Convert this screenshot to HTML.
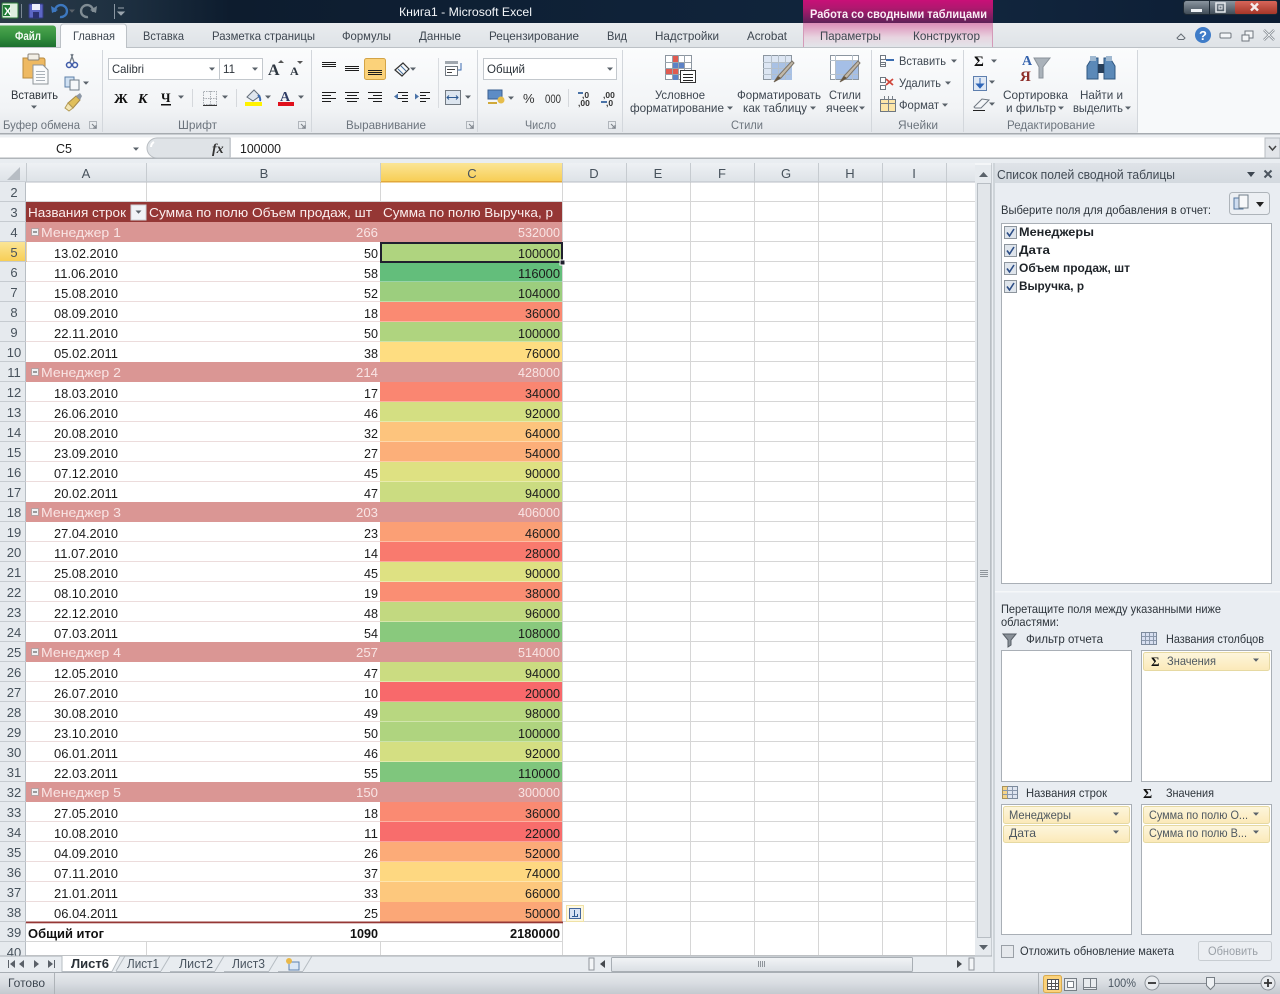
<!DOCTYPE html>
<html lang="ru"><head><meta charset="utf-8"><title>Книга1 - Microsoft Excel</title>
<style>
html,body{margin:0;padding:0;background:#e9edf2;width:1280px;height:994px;overflow:hidden}
svg{display:block;font-family:"Liberation Sans",sans-serif}
.r{font-size:12px;fill:#3d4650}
.g{font-size:12px;fill:#6c747d}
.p{font-size:12px;fill:#2c333a}
.c{font-size:13px;fill:#1c1c1c}
.b{font-size:13px;fill:#111;font-weight:bold}
.h{font-size:13px;fill:#fbeeee}
.m{font-size:13px;fill:#f9e4e4}
.n{font-size:13px;fill:#47525c}
.e{text-anchor:end}
.k{stroke:#222;stroke-width:1;fill:none}
</style></head><body>
<svg width="1280" height="994" viewBox="0 0 1280 994" xmlns="http://www.w3.org/2000/svg">
<defs>
<linearGradient id="tb" x1="0" x2="1" y1="0" y2="0"><stop offset="0" stop-color="#2b3b48"/><stop offset=".1" stop-color="#1d2f40"/><stop offset=".18" stop-color="#0d1c2e"/><stop offset=".5" stop-color="#0f2238"/><stop offset=".75" stop-color="#12263e"/><stop offset="1" stop-color="#0c1d33"/></linearGradient>
<linearGradient id="pk" x1="0" x2="0" y1="0" y2="1"><stop offset="0" stop-color="#c90f78"/><stop offset=".35" stop-color="#b0186f"/><stop offset="1" stop-color="#5e2158"/></linearGradient>
<linearGradient id="pk2" x1="0" x2="0" y1="0" y2="1"><stop offset="0" stop-color="#dc8cb8"/><stop offset=".6" stop-color="#e8d4e0"/><stop offset="1" stop-color="#e2e5e9"/></linearGradient>
<linearGradient id="tr" x1="0" x2="0" y1="0" y2="1"><stop offset="0" stop-color="#e9ecef"/><stop offset="1" stop-color="#dfe3e7"/></linearGradient>
<linearGradient id="rb" x1="0" x2="0" y1="0" y2="1"><stop offset="0" stop-color="#fbfcfd"/><stop offset=".7" stop-color="#f2f4f6"/><stop offset="1" stop-color="#e4e7eb"/></linearGradient>
<linearGradient id="fl" x1="0" x2="0" y1="0" y2="1"><stop offset="0" stop-color="#4da64f"/><stop offset=".5" stop-color="#35913f"/><stop offset="1" stop-color="#1c6f2f"/></linearGradient>
<linearGradient id="ch" x1="0" x2="0" y1="0" y2="1"><stop offset="0" stop-color="#eef1f4"/><stop offset="1" stop-color="#dde2e7"/></linearGradient>
<linearGradient id="cy" x1="0" x2="0" y1="0" y2="1"><stop offset="0" stop-color="#fbe596"/><stop offset="1" stop-color="#f7cd52"/></linearGradient>
<linearGradient id="it" x1="0" x2="0" y1="0" y2="1"><stop offset="0" stop-color="#fdf6dd"/><stop offset="1" stop-color="#fbe9b8"/></linearGradient>
<linearGradient id="st" x1="0" x2="0" y1="0" y2="1"><stop offset="0" stop-color="#e6e9ed"/><stop offset=".5" stop-color="#d9dde2"/><stop offset="1" stop-color="#c4c9cf"/></linearGradient>
<linearGradient id="cl" x1="0" x2="0" y1="0" y2="1"><stop offset="0" stop-color="#d8665a"/><stop offset="1" stop-color="#a53628"/></linearGradient>
<linearGradient id="wb" x1="0" x2="0" y1="0" y2="1"><stop offset="0" stop-color="#8d98a2"/><stop offset="1" stop-color="#3e4a55"/></linearGradient>
<linearGradient id="pn" x1="0" x2="0" y1="0" y2="1"><stop offset="0" stop-color="#dfe3e8"/><stop offset="1" stop-color="#d3d9df"/></linearGradient>
<linearGradient id="hs" x1="0" x2="0" y1="0" y2="1"><stop offset="0" stop-color="#f2f4f6"/><stop offset="1" stop-color="#dadfe4"/></linearGradient>
<path id="ar" d="M-3-1.5h6l-3 3.2z" fill="#5a626a"/>
<g id="cb"><rect x=".5" y=".5" width="12" height="12" fill="#dfe5ec" stroke="#8d959d"/><path d="M3 6.5l2.5 3.5 4.5-7" fill="none" stroke="#2c4d86" stroke-width="1.6"/></g>
<g id="la"><rect x="-3.5" y="-3.5" width="7" height="7" fill="none" stroke="#b0b5bb"/><path d="M-1-1l4 4M3 0v3h-3" stroke="#7a8088" fill="none"/></g>
</defs>

<!-- title bar -->
<rect width="1280" height="23" fill="url(#tb)"/>
<rect x="2" y="3" width="16" height="15" rx="1" fill="#dfeee0" stroke="#2e7a3a"/><rect x="3" y="5" width="7" height="11" fill="#1f7a35"/><text x="4" y="15" font-size="11" font-weight="bold" fill="#fff">X</text>
<rect x="21" y="4" width="1" height="14" fill="#7a8794"/>
<rect x="29" y="4" width="14" height="14" rx="1" fill="#5c66c4" stroke="#323a80"/><rect x="32" y="4" width="8" height="6" fill="#eef0fa"/><rect x="33" y="12" width="6" height="6" fill="#2b3170"/>
<path d="M55 12a6 6 0 1 1 5 5" fill="none" stroke="#3d78c0" stroke-width="2.4"/><path d="M51 6l1 7 6-3z" fill="#3d78c0"/><use href="#ar" x="72" y="11" style="fill:#b0b8c0"/>
<path d="M93 12a6 6 0 1 0-5 5" fill="none" stroke="#808c94" stroke-width="2.4"/><path d="M97 6l-1 7-6-3z" fill="#808c94"/>
<rect x="114" y="4" width="1" height="15" fill="#8a96a2"/><path d="M118 8h6M118 12h6l-3 3z" stroke="#9aa4ad" fill="#9aa4ad"/>
<text x="399" y="16" font-size="12" fill="#f3f6f9" textLength="133" lengthAdjust="spacingAndGlyphs">Книга1  -  Microsoft Excel</text>
<rect x="803" width="190" height="23" fill="url(#pk)"/>
<text x="810" y="18" font-size="11.5" font-weight="bold" fill="#fbeef6" textLength="177" lengthAdjust="spacingAndGlyphs">Работа со сводными таблицами</text>
<rect x="1183.500" y=".5" width="94" height="14" rx="3" fill="url(#wb)" stroke="#1c2833"/>
<rect x="1235" y="1" width="42" height="13" rx="2" fill="url(#cl)"/>
<rect x="1191" y="9" width="11" height="3" fill="#eef1f4"/><rect x="1216" y="3" width="9" height="9" fill="none" stroke="#e8ecef" stroke-width="1.5"/>
<rect x="1219" y="6" width="3" height="3" fill="none" stroke="#e8ecef"/><rect x="1209" y="1" width="1" height="13" fill="#1c2833"/>
<path d="M1251 3.500l7 7M1258 3.500l-7 7" stroke="#f4eceb" stroke-width="2.4"/>

<!-- tabs row -->
<rect y="23" width="1280" height="24" fill="url(#tr)"/>
<rect x="803" y="23" width="190" height="24" fill="url(#pk2)"/>
<rect x="803" y="23" width="1" height="24" fill="#d49ab8"/><rect x="992" y="23" width="1" height="24" fill="#d49ab8"/>
<rect y="47" width="1280" height="1" fill="#bcc1c6"/>
<path d="M0 25.500h53a3 3 0 0 1 3 3V47H0z" fill="url(#fl)"/>
<text x="15" y="40" font-size="12" font-weight="bold" fill="#f3faf3" textLength="26" lengthAdjust="spacingAndGlyphs">Файл</text>
<path d="M60.500 48V27a3 3 0 0 1 3-3h60a3 3 0 0 1 3 3v21" fill="#fbfcfd" stroke="#bcc1c6"/>
<g class="r">
<text x="73" y="40" textLength="42" lengthAdjust="spacingAndGlyphs">Главная</text>
<text x="143" y="40" textLength="41" lengthAdjust="spacingAndGlyphs">Вставка</text>
<text x="212" y="40" textLength="103" lengthAdjust="spacingAndGlyphs">Разметка страницы</text>
<text x="342" y="40" textLength="49" lengthAdjust="spacingAndGlyphs">Формулы</text>
<text x="419" y="40" textLength="42" lengthAdjust="spacingAndGlyphs">Данные</text>
<text x="489" y="40" textLength="90" lengthAdjust="spacingAndGlyphs">Рецензирование</text>
<text x="607" y="40" textLength="20" lengthAdjust="spacingAndGlyphs">Вид</text>
<text x="655" y="40" textLength="64" lengthAdjust="spacingAndGlyphs">Надстройки</text>
<text x="747" y="40" textLength="40" lengthAdjust="spacingAndGlyphs">Acrobat</text>
<text x="820" y="40" textLength="61" lengthAdjust="spacingAndGlyphs">Параметры</text>
<text x="913" y="40" textLength="67" lengthAdjust="spacingAndGlyphs">Конструктор</text>
</g>
<path d="M1177 38l4-4 4 4-1.500 1.500h-5z" fill="none" stroke="#666d75"/>
<circle cx="1203" cy="35" r="8" fill="#3f7cc8"/><text x="1203" y="40" text-anchor="middle" font-size="13" font-weight="bold" fill="#fff">?</text>
<rect x="1220" y="33" width="11" height="5" rx="1" fill="#f4f6f8" stroke="#6e757d"/>
<rect x="1245" y="31" width="8" height="7" fill="#f4f6f8" stroke="#6e757d"/><rect x="1242" y="35" width="7" height="6" fill="#f4f6f8" stroke="#6e757d"/>
<path d="M1264 30l10 10M1274 30l-10 10" stroke="#7c838b" stroke-width="2.4"/><path d="M1264 30l10 10M1274 30l-10 10" stroke="#eef0f2" stroke-width="1"/>

<!-- ribbon -->
<rect y="48" width="1280" height="85" fill="url(#rb)"/>
<rect x="1138" y="48" width="142" height="85" fill="#f7f9fa"/>
<rect y="133" width="1280" height="1.500" fill="#a6abb0"/>
<rect y="134.500" width="1280" height="3" fill="#eceff2"/>
<g fill="#d3d7dc"><rect x="102" y="50" width="1" height="82"/><rect x="311" y="50" width="1" height="82"/><rect x="477" y="50" width="1" height="82"/><rect x="622" y="50" width="1" height="82"/><rect x="871" y="50" width="1" height="82"/><rect x="963" y="50" width="1" height="82"/><rect x="1137" y="50" width="1" height="82"/></g>
<!-- clipboard -->
<path d="M23 58h20a2 2 0 0 1 2 2v18H23z" fill="#eeb962" stroke="#b88a3e"/><rect x="28" y="54" width="11" height="6" rx="1" fill="#f2efe6" stroke="#8b8378"/>
<path d="M33 65h10l5 5v14H33z" fill="#fafbfc" stroke="#8e9499"/><path d="M36 71.500h9M36 74.500h9M36 77.500h9M36 80.500h9" stroke="#aab1b8"/>
<g><circle cx="69" cy="65" r="2.500" fill="none" stroke="#3e5aa8" stroke-width="1.500"/><circle cx="75" cy="65" r="2.500" fill="none" stroke="#3e5aa8" stroke-width="1.500"/><path d="M70 62l3-8M74 62l-3-8" stroke="#707a85" stroke-width="1.300"/></g>
<rect x="65" y="77" width="9" height="10" fill="#cfe0f2" stroke="#5d7fa8"/><rect x="70" y="80" width="9" height="10" fill="#f6f8fa" stroke="#6f7c88"/>
<use href="#ar" x="86" y="83"/>
<path d="M68 103l8-7 4 4-7 8z" fill="#e0bf5a" stroke="#a4884a"/><path d="M65 108l3-5 5 5-4 3z" fill="#f3e6b5" stroke="#b39b55"/><path d="M76 96l4-3 2 3-2 4" fill="#8d98a6"/>
<text class="p" x="11" y="99" textLength="47" lengthAdjust="spacingAndGlyphs">Вставить</text>
<use href="#ar" x="34" y="107"/>
<text class="g" x="3" y="129" textLength="77" lengthAdjust="spacingAndGlyphs">Буфер обмена</text>
<use href="#la" x="93" y="125"/>
<!-- font -->
<rect x="108.500" y="58.500" width="154" height="21" fill="#fff" stroke="#c3c8cd"/><rect x="219" y="59" width="1" height="20" fill="#c3c8cd"/>
<text class="p" x="112" y="73" textLength="32" lengthAdjust="spacingAndGlyphs">Calibri</text><use href="#ar" x="212" y="69"/>
<text class="p" x="223" y="73" textLength="12" lengthAdjust="spacingAndGlyphs">11</text><use href="#ar" x="255" y="69"/>
<text x="268" y="75" font-family="Liberation Serif" font-size="16" font-weight="bold" fill="#2d3640">A</text><path d="M278 63l3-3 3 3z" fill="#555"/>
<text x="290" y="75" font-family="Liberation Serif" font-size="12" font-weight="bold" fill="#2d3640">A</text><path d="M297 61l3 3 3-3z" fill="#555"/>
<text x="114" y="103" font-family="Liberation Serif" font-size="14" font-weight="bold" fill="#111">Ж</text>
<text x="138" y="103" font-family="Liberation Serif" font-size="14" font-weight="bold" font-style="italic" fill="#111">К</text>
<text x="161" y="102" font-family="Liberation Serif" font-size="13" font-weight="bold" fill="#111">Ч</text><rect x="161" y="104" width="10" height="1.500" fill="#111"/>
<use href="#ar" x="181" y="97"/><rect x="192" y="89" width="1" height="18" fill="#d5d8dc"/>
<path d="M203.500 91.500h13v13h-13zM210.500 91v14M203 98.500h14" fill="none" stroke="#a8adb3" stroke-dasharray="1.500 1"/><path d="M203 105.500h14" stroke="#333"/>
<use href="#ar" x="225" y="97"/><rect x="236" y="89" width="1" height="18" fill="#d5d8dc"/>
<path d="M247 97l7-7 6 6-7 5z" fill="#dfe6ee" stroke="#66707c"/><path d="M258 95q3 3 2 6" stroke="#3c6ab0" stroke-width="2" fill="none"/>
<rect x="245" y="102" width="17" height="4" fill="#fff200"/><use href="#ar" x="268" y="97"/>
<text x="280" y="101" font-family="Liberation Serif" font-size="14" font-weight="bold" fill="#2f3d66">A</text><rect x="278" y="102" width="16" height="4" fill="#e0101c"/><use href="#ar" x="301" y="97"/>
<text class="g" x="178" y="129" textLength="39" lengthAdjust="spacingAndGlyphs">Шрифт</text>
<use href="#la" x="302" y="125"/>
<!-- alignment -->
<rect x="364.500" y="58.500" width="21" height="21" rx="2" fill="#fbd27a" stroke="#d3a447"/>
<path d="M322 62.500h14M322 64.500h14M322 66.500h14M345 66.500h14M345 68.500h14M345 70.500h14M368 70.500h14M368 72.500h14M368 74.500h14" stroke="#1c1c1c"/>
<path d="M395 70l8-7 6 6-7 7z" fill="none" stroke="#333" stroke-width="1.200"/><path d="M398 69l5 5M401 66l5 5" stroke="#47709e"/><use href="#ar" x="413" y="69"/>
<path d="M322 92.500h14M322 95.500h9M322 98.500h14M322 101.500h9M345 92.500h14M347 95.500h10M345 98.500h14M347 101.500h10M368 92.500h14M373 95.500h9M368 98.500h14M373 101.500h9" stroke="#1c1c1c"/>
<path d="M398 92.500h10M402 95.500h6M398 98.500h10M402 101.500h6M420 92.500h10M420 95.500h6M420 98.500h10M420 101.500h6" stroke="#1c1c1c"/><path d="M394 96.500l4-3v6zM419 96.500l-4-3v6z" fill="#4a73a8"/>
<rect x="438" y="58" width="1" height="50" fill="#d9dce0"/>
<rect x="445" y="61" width="13" height="3" fill="#a0a7ae"/><rect x="445.500" y="66.500" width="12" height="9" fill="#fff" stroke="#727a82"/><path d="M447 69.500h8M447 72.500h5" stroke="#444"/><path d="M461 63v7h-3" fill="none" stroke="#3c6ab0"/>
<rect x="445.500" y="90.500" width="15" height="14" fill="#dce5ef" stroke="#727a82"/><path d="M447 97.500h11M449 95.500l-2 2 2 2M456 95.500l2 2-2 2" stroke="#2e5a92" fill="none"/><use href="#ar" x="468" y="97"/>
<text class="g" x="346" y="129" textLength="80" lengthAdjust="spacingAndGlyphs">Выравнивание</text>
<use href="#la" x="470" y="125"/>
<!-- number -->
<rect x="483.500" y="58.500" width="133" height="21" fill="#fff" stroke="#c3c8cd"/>
<text class="p" x="487" y="73" textLength="38" lengthAdjust="spacingAndGlyphs">Общий</text><use href="#ar" x="610" y="69"/>
<rect x="488" y="90" width="14" height="9" fill="#5d8cc6" stroke="#3a5f90"/><circle cx="501" cy="100" r="3.500" fill="#e6bd4c"/><path d="M488 103h9" stroke="#d0a93a" stroke-width="2"/>
<use href="#ar" x="511" y="98"/>
<text x="523" y="103" font-size="13" fill="#333">%</text>
<text x="545" y="103" font-size="12" fill="#333" textLength="16" lengthAdjust="spacingAndGlyphs">000</text>
<rect x="568" y="89" width="1" height="18" fill="#d5d8dc"/>
<text x="582" y="98" font-size="8.500" font-weight="bold" fill="#333">,0</text><text x="578" y="106" font-size="8.500" font-weight="bold" fill="#333">,00</text><path d="M578 93h5" stroke="#4a73a8" stroke-width="2"/>
<text x="603" y="98" font-size="8.500" font-weight="bold" fill="#333">,00</text><text x="606" y="106" font-size="8.500" font-weight="bold" fill="#333">,0</text><path d="M601 102h6" stroke="#4a73a8" stroke-width="2"/>
<text class="g" x="525" y="129" textLength="31" lengthAdjust="spacingAndGlyphs">Число</text>
<use href="#la" x="612" y="125"/>
<!-- styles -->
<g>
<rect x="665.500" y="55.500" width="26" height="24" fill="#fff" stroke="#8c96a0"/>
<rect x="672" y="56" width="6" height="8" fill="#e05a50"/><rect x="672" y="62" width="12" height="6" fill="#5c82c6"/><rect x="666" y="68" width="12" height="6" fill="#e05a50"/><rect x="672" y="74" width="6" height="6" fill="#5c82c6"/>
<path d="M672.500 55v25M678.500 55v25M684.500 55v25M665 62.500h26M665 68.500h26M665 74.500h26" stroke="#98a2ac"/>
<rect x="680.500" y="70.500" width="15" height="12" fill="#fff" stroke="#333"/><path d="M683 74.500h10M683 77.500h10M683 80.500h10" stroke="#222"/>
</g>
<text class="r" x="655" y="99" textLength="50" lengthAdjust="spacingAndGlyphs">Условное</text>
<text class="r" x="630" y="112" textLength="94" lengthAdjust="spacingAndGlyphs">форматирование</text><use href="#ar" x="730" y="108"/>
<g><rect x="763.500" y="55.500" width="28" height="24" fill="#dde6f3" stroke="#8c96a0"/><rect x="771" y="62" width="21" height="18" fill="#a9c1e4"/><path d="M771.500 55v25M778.500 55v25M785.500 55v25M763 62.500h28M763 68.500h28M763 74.500h28" stroke="#b4bfca"/><path d="M774 82l4-6 14-15 2 2-13 15z" fill="#c2b8a8" stroke="#7c756a"/><path d="M774 82l4-6 3 2z" fill="#66553e"/></g>
<text class="r" x="737" y="99" textLength="84" lengthAdjust="spacingAndGlyphs">Форматировать</text>
<text class="r" x="743" y="112" textLength="64" lengthAdjust="spacingAndGlyphs">как таблицу</text><use href="#ar" x="813" y="108"/>
<g><rect x="830.500" y="55.500" width="28" height="24" fill="#fff" stroke="#8c96a0"/><rect x="835" y="60" width="23" height="19" fill="#a5bfe6"/><path d="M835.500 55v25M852.500 55v25M830 60.500h28M830 74.500h28" stroke="#b4bfca"/><path d="M840 82l4-6 14-15 2 2-13 15z" fill="#c2b8a8" stroke="#7c756a"/><path d="M840 82l4-6 3 2z" fill="#66553e"/></g>
<text class="r" x="829" y="99" textLength="32" lengthAdjust="spacingAndGlyphs">Стили</text>
<text class="r" x="826" y="112" textLength="32" lengthAdjust="spacingAndGlyphs">ячеек</text><use href="#ar" x="862" y="108"/>
<text class="g" x="731" y="129" textLength="32" lengthAdjust="spacingAndGlyphs">Стили</text>
<!-- cells -->
<path d="M880.500 55.500h5v4h-5zM880.500 62.500h5v4h-5zM880.500 64.500h5M880.500 59.500v3" fill="#fff" stroke="#6e7781"/><path d="M886 60h8" stroke="#3b6db0" stroke-width="2"/>
<text class="r" x="899" y="65" textLength="47" lengthAdjust="spacingAndGlyphs">Вставить</text><use href="#ar" x="954" y="61"/>
<path d="M880.500 77.500h5v5h-5zM880.500 85.500h5v4h-5z" fill="#fff" stroke="#6e7781"/><path d="M886 79l7 6M893 79l-7 6" stroke="#d0463a" stroke-width="1.800"/>
<text class="r" x="899" y="87" textLength="42" lengthAdjust="spacingAndGlyphs">Удалить</text><use href="#ar" x="948" y="83"/>
<rect x="880.500" y="99.500" width="15" height="12" fill="#fde6a8" stroke="#6e7781"/><path d="M880 103.500h16M888.500 99v13M884.500 96v3M888.500 96v3M892.500 96v3" stroke="#7a828a"/>
<text class="r" x="899" y="109" textLength="40" lengthAdjust="spacingAndGlyphs">Формат</text><use href="#ar" x="945" y="105"/>
<text class="g" x="898" y="129" textLength="40" lengthAdjust="spacingAndGlyphs">Ячейки</text>
<!-- editing -->
<text x="974" y="66" font-family="Liberation Serif" font-size="15" font-weight="bold" fill="#111">Σ</text><use href="#ar" x="994" y="61"/>
<rect x="973.500" y="76.500" width="13" height="14" fill="#dfe8f4" stroke="#5e7fae"/><path d="M980 78v7M976.500 84l3.500 4 3.500-4z" fill="#2f66b8" stroke="#2f66b8"/><use href="#ar" x="992" y="82"/>
<path d="M974 107l8-8 7 1-8 8h-6z" fill="#f4f6f8" stroke="#6e7781"/><path d="M973 110.500h12" stroke="#222"/><use href="#ar" x="992" y="104"/>
<path d="M1034 58h16l-7 9v11h-4V67z" fill="#aab2ba" stroke="#8a929a"/>
<text x="1022" y="65" font-size="14" font-weight="bold" font-family="Liberation Serif" fill="#3563ad">А</text>
<text x="1020" y="81" font-size="15" font-weight="bold" font-family="Liberation Serif" fill="#8e2f2a">Я</text>
<text class="r" x="1003" y="99" textLength="65" lengthAdjust="spacingAndGlyphs">Сортировка</text>
<text class="r" x="1006" y="112" textLength="50" lengthAdjust="spacingAndGlyphs">и фильтр</text><use href="#ar" x="1061" y="108"/>
<path d="M1087 79V66l5-8h6v21zM1104 79V58h6l5 8v13z" fill="#5b89b8" stroke="#2f5680"/><rect x="1098" y="64" width="6" height="9" fill="#28405c"/><rect x="1090" y="56" width="6" height="5" fill="#9fb8d0"/><rect x="1106" y="56" width="6" height="5" fill="#9fb8d0"/>
<text class="r" x="1080" y="99" textLength="43" lengthAdjust="spacingAndGlyphs">Найти и</text>
<text class="r" x="1073" y="112" textLength="50" lengthAdjust="spacingAndGlyphs">выделить</text><use href="#ar" x="1128" y="108"/>
<text class="g" x="1007" y="129" textLength="88" lengthAdjust="spacingAndGlyphs">Редактирование</text>

<!-- formula bar -->
<rect y="137.500" width="1280" height="20" fill="#fff"/><rect y="157.500" width="1280" height="1.500" fill="#b0b5ba"/>
<rect y="159" width="1280" height="4" fill="#e9edf1"/>
<text class="c" x="56" y="153" font-size="13" textLength="16" lengthAdjust="spacingAndGlyphs">C5</text>
<use href="#ar" x="136" y="149" style="fill:#333"/>
<path d="M157 138h73v20h-73a10 10 0 0 1 0-20z" fill="#dfe3e7" stroke="#b8bdc2"/><path d="M154 142a6 6 0 0 0-3 5" stroke="#fff" stroke-width="2" fill="none"/>
<text x="212" y="153" font-family="Liberation Serif" font-style="italic" font-weight="bold" font-size="14" fill="#333">fx</text>
<rect x="230" y="138" width="1" height="20" fill="#c8ccd1"/>
<text class="c" x="240" y="153" textLength="41" lengthAdjust="spacingAndGlyphs">100000</text>
<rect x="1265" y="138" width="15" height="20" fill="#e2e5e9" stroke="#b8bdc2"/><path d="M1269 146l3.500 4 3.500-4" fill="none" stroke="#444" stroke-width="1.500"/>

<!-- grid background -->
<rect x="0" y="163" width="975" height="793" fill="#fff"/>
<g stroke="#d6d6d6">
<path d="M146.500 182v20M380.500 182v20M146.500 942v14M380.500 942v14M562.500 182v774M626.500 182v774M690.500 182v774M754.500 182v774M818.500 182v774M882.500 182v774M946.500 182v774"/>
<path d="M26 201.500h536M26 941.500h536M26 955.500h949"/>
<path d="M562 201.500h413M562 221.500h413M562 241.500h413M562 261.500h413M562 281.500h413M562 301.500h413M562 321.500h413M562 341.500h413M562 361.500h413M562 381.500h413M562 401.500h413M562 421.500h413M562 441.500h413M562 461.500h413M562 481.500h413M562 501.500h413M562 521.500h413M562 541.500h413M562 561.500h413M562 581.500h413M562 601.500h413M562 621.500h413M562 641.500h413M562 661.500h413M562 681.500h413M562 701.500h413M562 721.500h413M562 741.500h413M562 761.500h413M562 781.500h413M562 801.500h413M562 821.500h413M562 841.500h413M562 861.500h413M562 881.500h413M562 901.500h413M562 921.500h413"/>
</g>
<g stroke="#ecdcdc">
<path d="M26 261.500h354M26 281.500h354M26 301.500h354M26 321.500h354M26 341.500h354M26 401.500h354M26 421.500h354M26 441.500h354M26 461.500h354M26 481.500h354M26 541.500h354M26 561.500h354M26 581.500h354M26 601.500h354M26 621.500h354M26 681.500h354M26 701.500h354M26 721.500h354M26 741.500h354M26 761.500h354M26 821.500h354M26 841.500h354M26 861.500h354M26 881.500h354M26 901.500h354"/>
</g>

<!-- column headers -->
<rect y="163" width="975" height="19" fill="url(#ch)"/>
<rect x="380" y="163" width="182" height="19" fill="url(#cy)"/>
<rect y="181.500" width="975" height="1" fill="#b8bec4"/><rect x="380" y="181" width="182" height="1.500" fill="#e2a83a"/>
<path d="M20 167v13h-13z" fill="#b7bdc4"/>
<path d="M26.500 163v19M146.500 163v19M380.500 163v19M562.500 163v19M626.500 163v19M690.500 163v19M754.500 163v19M818.500 163v19M882.500 163v19M946.500 163v19" stroke="#c6cbd0"/>
<g class="n" text-anchor="middle"><text x="86" y="178">A</text><text x="264" y="178">B</text><text x="472" y="178">C</text><text x="594" y="178">D</text><text x="658" y="178">E</text><text x="722" y="178">F</text><text x="786" y="178">G</text><text x="850" y="178">H</text><text x="914" y="178">I</text></g>

<!-- row header col -->
<rect y="182" width="26" height="774" fill="#e6eaee"/>
<rect y="242" width="26" height="20" fill="url(#cy)"/><rect x="25" y="242" width="1.500" height="20" fill="#e2a83a"/>
<path d="M25.500 182v774" stroke="#b8bec4"/>
<path d="M0 201.500h26M0 221.500h26M0 241.500h26M0 261.500h26M0 281.500h26M0 301.500h26M0 321.500h26M0 341.500h26M0 361.500h26M0 381.500h26M0 401.500h26M0 421.500h26M0 441.500h26M0 461.500h26M0 481.500h26M0 501.500h26M0 521.500h26M0 541.500h26M0 561.500h26M0 581.500h26M0 601.500h26M0 621.500h26M0 641.500h26M0 661.500h26M0 681.500h26M0 701.500h26M0 721.500h26M0 741.500h26M0 761.500h26M0 781.500h26M0 801.500h26M0 821.500h26M0 841.500h26M0 861.500h26M0 881.500h26M0 901.500h26M0 921.500h26M0 941.500h26" stroke="#c6cbd0"/>
<g class="n" text-anchor="middle">
<text x="14" y="197">2</text><text x="14" y="217">3</text><text x="14" y="237">4</text><text x="14" y="257">5</text><text x="14" y="277">6</text><text x="14" y="297">7</text><text x="14" y="317">8</text><text x="14" y="337">9</text><text x="14" y="357">10</text><text x="14" y="377">11</text><text x="14" y="397">12</text><text x="14" y="417">13</text><text x="14" y="437">14</text><text x="14" y="457">15</text><text x="14" y="477">16</text><text x="14" y="497">17</text><text x="14" y="517">18</text><text x="14" y="537">19</text><text x="14" y="557">20</text><text x="14" y="577">21</text><text x="14" y="597">22</text><text x="14" y="617">23</text><text x="14" y="637">24</text><text x="14" y="657">25</text><text x="14" y="677">26</text><text x="14" y="697">27</text><text x="14" y="717">28</text><text x="14" y="737">29</text><text x="14" y="757">30</text><text x="14" y="777">31</text><text x="14" y="797">32</text><text x="14" y="817">33</text><text x="14" y="837">34</text><text x="14" y="857">35</text><text x="14" y="877">36</text><text x="14" y="897">37</text><text x="14" y="917">38</text><text x="14" y="937">39</text><text x="14" y="957">40</text>
</g>

<!-- table header -->
<rect x="26" y="202" width="536" height="20" fill="#953735"/>
<text class="h" x="28" y="217" textLength="98" lengthAdjust="spacingAndGlyphs">Названия строк</text>
<rect x="131" y="205" width="15" height="15" fill="#f1f3f6" stroke="#cfd3d8"/><use href="#ar" x="138.500" y="212" style="fill:#333"/>
<text class="h" x="149" y="217" textLength="223" lengthAdjust="spacingAndGlyphs">Сумма по полю Объем продаж, шт</text>
<text class="h" x="383" y="217" textLength="170" lengthAdjust="spacingAndGlyphs">Сумма по полю Выручка, р</text>

<!-- group rows -->
<g fill="#da9694"><rect x="26" y="222" width="536" height="20"/><rect x="26" y="362" width="536" height="20"/><rect x="26" y="502" width="536" height="20"/><rect x="26" y="642" width="536" height="20"/><rect x="26" y="782" width="536" height="20"/></g>
<g fill="#eef0f3" stroke="#b5a0a0"><rect x="31.500" y="228.500" width="7" height="7"/><rect x="31.500" y="368.500" width="7" height="7"/><rect x="31.500" y="508.500" width="7" height="7"/><rect x="31.500" y="648.500" width="7" height="7"/><rect x="31.500" y="788.500" width="7" height="7"/></g>
<g stroke="#444"><path d="M33 232h4M33 372h4M33 512h4M33 652h4M33 792h4"/></g>
<text class="m" x="41" y="237" textLength="80" lengthAdjust="spacingAndGlyphs">Менеджер 1</text><text class="m e" x="378" y="237" textLength="22" lengthAdjust="spacingAndGlyphs">266</text><text class="m e" x="560" y="237" textLength="42" lengthAdjust="spacingAndGlyphs">532000</text>
<text class="m" x="41" y="377" textLength="80" lengthAdjust="spacingAndGlyphs">Менеджер 2</text><text class="m e" x="378" y="377" textLength="22" lengthAdjust="spacingAndGlyphs">214</text><text class="m e" x="560" y="377" textLength="42" lengthAdjust="spacingAndGlyphs">428000</text>
<text class="m" x="41" y="517" textLength="80" lengthAdjust="spacingAndGlyphs">Менеджер 3</text><text class="m e" x="378" y="517" textLength="22" lengthAdjust="spacingAndGlyphs">203</text><text class="m e" x="560" y="517" textLength="42" lengthAdjust="spacingAndGlyphs">406000</text>
<text class="m" x="41" y="657" textLength="80" lengthAdjust="spacingAndGlyphs">Менеджер 4</text><text class="m e" x="378" y="657" textLength="22" lengthAdjust="spacingAndGlyphs">257</text><text class="m e" x="560" y="657" textLength="42" lengthAdjust="spacingAndGlyphs">514000</text>
<text class="m" x="41" y="797" textLength="80" lengthAdjust="spacingAndGlyphs">Менеджер 5</text><text class="m e" x="378" y="797" textLength="22" lengthAdjust="spacingAndGlyphs">150</text><text class="m e" x="560" y="797" textLength="42" lengthAdjust="spacingAndGlyphs">300000</text>

<!-- colour scale -->
<rect x="380" y="242" width="182" height="20" fill="#afd47f"/>
<rect x="380" y="262" width="182" height="20" fill="#63be7b"/>
<rect x="380" y="282" width="182" height="20" fill="#9cce7e"/>
<rect x="380" y="302" width="182" height="20" fill="#fa8a72"/>
<rect x="380" y="322" width="182" height="20" fill="#afd47f"/>
<rect x="380" y="342" width="182" height="20" fill="#fedd81"/>
<rect x="380" y="382" width="182" height="20" fill="#fa8671"/>
<rect x="380" y="402" width="182" height="20" fill="#d4df82"/>
<rect x="380" y="422" width="182" height="20" fill="#fdc47d"/>
<rect x="380" y="442" width="182" height="20" fill="#fcaf79"/>
<rect x="380" y="462" width="182" height="20" fill="#dee182"/>
<rect x="380" y="482" width="182" height="20" fill="#cbdc81"/>
<rect x="380" y="522" width="182" height="20" fill="#fb9f75"/>
<rect x="380" y="542" width="182" height="20" fill="#f97a6e"/>
<rect x="380" y="562" width="182" height="20" fill="#dee182"/>
<rect x="380" y="582" width="182" height="20" fill="#fa8e73"/>
<rect x="380" y="602" width="182" height="20" fill="#c2d980"/>
<rect x="380" y="622" width="182" height="20" fill="#89c97d"/>
<rect x="380" y="662" width="182" height="20" fill="#cbdc81"/>
<rect x="380" y="682" width="182" height="20" fill="#f8696b"/>
<rect x="380" y="702" width="182" height="20" fill="#b8d780"/>
<rect x="380" y="722" width="182" height="20" fill="#afd47f"/>
<rect x="380" y="742" width="182" height="20" fill="#d4df82"/>
<rect x="380" y="762" width="182" height="20" fill="#7fc67d"/>
<rect x="380" y="802" width="182" height="20" fill="#fa8a72"/>
<rect x="380" y="822" width="182" height="20" fill="#f86d6c"/>
<rect x="380" y="842" width="182" height="20" fill="#fcab78"/>
<rect x="380" y="862" width="182" height="20" fill="#fed881"/>
<rect x="380" y="882" width="182" height="20" fill="#fdc87d"/>
<rect x="380" y="902" width="182" height="20" fill="#fba777"/>
<path stroke="#fff" stroke-opacity=".35" d="M380 261.500h182M380 281.500h182M380 301.500h182M380 321.500h182M380 341.500h182M380 401.500h182M380 421.500h182M380 441.500h182M380 461.500h182M380 481.500h182M380 541.500h182M380 561.500h182M380 581.500h182M380 601.500h182M380 621.500h182M380 681.500h182M380 701.500h182M380 721.500h182M380 741.500h182M380 761.500h182M380 821.500h182M380 841.500h182M380 861.500h182M380 881.500h182"/>

<!-- data rows -->
<g class="c">
<text x="54" y="258" textLength="64" lengthAdjust="spacingAndGlyphs">13.02.2010</text><text class="e" x="378" y="258" textLength="14" lengthAdjust="spacingAndGlyphs">50</text><text class="e" x="560" y="258" textLength="42" lengthAdjust="spacingAndGlyphs">100000</text>
<text x="54" y="278" textLength="64" lengthAdjust="spacingAndGlyphs">11.06.2010</text><text class="e" x="378" y="278" textLength="14" lengthAdjust="spacingAndGlyphs">58</text><text class="e" x="560" y="278" textLength="42" lengthAdjust="spacingAndGlyphs">116000</text>
<text x="54" y="298" textLength="64" lengthAdjust="spacingAndGlyphs">15.08.2010</text><text class="e" x="378" y="298" textLength="14" lengthAdjust="spacingAndGlyphs">52</text><text class="e" x="560" y="298" textLength="42" lengthAdjust="spacingAndGlyphs">104000</text>
<text x="54" y="318" textLength="64" lengthAdjust="spacingAndGlyphs">08.09.2010</text><text class="e" x="378" y="318" textLength="14" lengthAdjust="spacingAndGlyphs">18</text><text class="e" x="560" y="318" textLength="35" lengthAdjust="spacingAndGlyphs">36000</text>
<text x="54" y="338" textLength="64" lengthAdjust="spacingAndGlyphs">22.11.2010</text><text class="e" x="378" y="338" textLength="14" lengthAdjust="spacingAndGlyphs">50</text><text class="e" x="560" y="338" textLength="42" lengthAdjust="spacingAndGlyphs">100000</text>
<text x="54" y="358" textLength="64" lengthAdjust="spacingAndGlyphs">05.02.2011</text><text class="e" x="378" y="358" textLength="14" lengthAdjust="spacingAndGlyphs">38</text><text class="e" x="560" y="358" textLength="35" lengthAdjust="spacingAndGlyphs">76000</text>

<text x="54" y="398" textLength="64" lengthAdjust="spacingAndGlyphs">18.03.2010</text><text class="e" x="378" y="398" textLength="14" lengthAdjust="spacingAndGlyphs">17</text><text class="e" x="560" y="398" textLength="35" lengthAdjust="spacingAndGlyphs">34000</text>
<text x="54" y="418" textLength="64" lengthAdjust="spacingAndGlyphs">26.06.2010</text><text class="e" x="378" y="418" textLength="14" lengthAdjust="spacingAndGlyphs">46</text><text class="e" x="560" y="418" textLength="35" lengthAdjust="spacingAndGlyphs">92000</text>
<text x="54" y="438" textLength="64" lengthAdjust="spacingAndGlyphs">20.08.2010</text><text class="e" x="378" y="438" textLength="14" lengthAdjust="spacingAndGlyphs">32</text><text class="e" x="560" y="438" textLength="35" lengthAdjust="spacingAndGlyphs">64000</text>
<text x="54" y="458" textLength="64" lengthAdjust="spacingAndGlyphs">23.09.2010</text><text class="e" x="378" y="458" textLength="14" lengthAdjust="spacingAndGlyphs">27</text><text class="e" x="560" y="458" textLength="35" lengthAdjust="spacingAndGlyphs">54000</text>
<text x="54" y="478" textLength="64" lengthAdjust="spacingAndGlyphs">07.12.2010</text><text class="e" x="378" y="478" textLength="14" lengthAdjust="spacingAndGlyphs">45</text><text class="e" x="560" y="478" textLength="35" lengthAdjust="spacingAndGlyphs">90000</text>
<text x="54" y="498" textLength="64" lengthAdjust="spacingAndGlyphs">20.02.2011</text><text class="e" x="378" y="498" textLength="14" lengthAdjust="spacingAndGlyphs">47</text><text class="e" x="560" y="498" textLength="35" lengthAdjust="spacingAndGlyphs">94000</text>

<text x="54" y="538" textLength="64" lengthAdjust="spacingAndGlyphs">27.04.2010</text><text class="e" x="378" y="538" textLength="14" lengthAdjust="spacingAndGlyphs">23</text><text class="e" x="560" y="538" textLength="35" lengthAdjust="spacingAndGlyphs">46000</text>
<text x="54" y="558" textLength="64" lengthAdjust="spacingAndGlyphs">11.07.2010</text><text class="e" x="378" y="558" textLength="14" lengthAdjust="spacingAndGlyphs">14</text><text class="e" x="560" y="558" textLength="35" lengthAdjust="spacingAndGlyphs">28000</text>
<text x="54" y="578" textLength="64" lengthAdjust="spacingAndGlyphs">25.08.2010</text><text class="e" x="378" y="578" textLength="14" lengthAdjust="spacingAndGlyphs">45</text><text class="e" x="560" y="578" textLength="35" lengthAdjust="spacingAndGlyphs">90000</text>
<text x="54" y="598" textLength="64" lengthAdjust="spacingAndGlyphs">08.10.2010</text><text class="e" x="378" y="598" textLength="14" lengthAdjust="spacingAndGlyphs">19</text><text class="e" x="560" y="598" textLength="35" lengthAdjust="spacingAndGlyphs">38000</text>
<text x="54" y="618" textLength="64" lengthAdjust="spacingAndGlyphs">22.12.2010</text><text class="e" x="378" y="618" textLength="14" lengthAdjust="spacingAndGlyphs">48</text><text class="e" x="560" y="618" textLength="35" lengthAdjust="spacingAndGlyphs">96000</text>
<text x="54" y="638" textLength="64" lengthAdjust="spacingAndGlyphs">07.03.2011</text><text class="e" x="378" y="638" textLength="14" lengthAdjust="spacingAndGlyphs">54</text><text class="e" x="560" y="638" textLength="42" lengthAdjust="spacingAndGlyphs">108000</text>

<text x="54" y="678" textLength="64" lengthAdjust="spacingAndGlyphs">12.05.2010</text><text class="e" x="378" y="678" textLength="14" lengthAdjust="spacingAndGlyphs">47</text><text class="e" x="560" y="678" textLength="35" lengthAdjust="spacingAndGlyphs">94000</text>
<text x="54" y="698" textLength="64" lengthAdjust="spacingAndGlyphs">26.07.2010</text><text class="e" x="378" y="698" textLength="14" lengthAdjust="spacingAndGlyphs">10</text><text class="e" x="560" y="698" textLength="35" lengthAdjust="spacingAndGlyphs">20000</text>
<text x="54" y="718" textLength="64" lengthAdjust="spacingAndGlyphs">30.08.2010</text><text class="e" x="378" y="718" textLength="14" lengthAdjust="spacingAndGlyphs">49</text><text class="e" x="560" y="718" textLength="35" lengthAdjust="spacingAndGlyphs">98000</text>
<text x="54" y="738" textLength="64" lengthAdjust="spacingAndGlyphs">23.10.2010</text><text class="e" x="378" y="738" textLength="14" lengthAdjust="spacingAndGlyphs">50</text><text class="e" x="560" y="738" textLength="42" lengthAdjust="spacingAndGlyphs">100000</text>
<text x="54" y="758" textLength="64" lengthAdjust="spacingAndGlyphs">06.01.2011</text><text class="e" x="378" y="758" textLength="14" lengthAdjust="spacingAndGlyphs">46</text><text class="e" x="560" y="758" textLength="35" lengthAdjust="spacingAndGlyphs">92000</text>
<text x="54" y="778" textLength="64" lengthAdjust="spacingAndGlyphs">22.03.2011</text><text class="e" x="378" y="778" textLength="14" lengthAdjust="spacingAndGlyphs">55</text><text class="e" x="560" y="778" textLength="42" lengthAdjust="spacingAndGlyphs">110000</text>

<text x="54" y="818" textLength="64" lengthAdjust="spacingAndGlyphs">27.05.2010</text><text class="e" x="378" y="818" textLength="14" lengthAdjust="spacingAndGlyphs">18</text><text class="e" x="560" y="818" textLength="35" lengthAdjust="spacingAndGlyphs">36000</text>
<text x="54" y="838" textLength="64" lengthAdjust="spacingAndGlyphs">10.08.2010</text><text class="e" x="378" y="838" textLength="14" lengthAdjust="spacingAndGlyphs">11</text><text class="e" x="560" y="838" textLength="35" lengthAdjust="spacingAndGlyphs">22000</text>
<text x="54" y="858" textLength="64" lengthAdjust="spacingAndGlyphs">04.09.2010</text><text class="e" x="378" y="858" textLength="14" lengthAdjust="spacingAndGlyphs">26</text><text class="e" x="560" y="858" textLength="35" lengthAdjust="spacingAndGlyphs">52000</text>
<text x="54" y="878" textLength="64" lengthAdjust="spacingAndGlyphs">07.11.2010</text><text class="e" x="378" y="878" textLength="14" lengthAdjust="spacingAndGlyphs">37</text><text class="e" x="560" y="878" textLength="35" lengthAdjust="spacingAndGlyphs">74000</text>
<text x="54" y="898" textLength="64" lengthAdjust="spacingAndGlyphs">21.01.2011</text><text class="e" x="378" y="898" textLength="14" lengthAdjust="spacingAndGlyphs">33</text><text class="e" x="560" y="898" textLength="35" lengthAdjust="spacingAndGlyphs">66000</text>
<text x="54" y="918" textLength="64" lengthAdjust="spacingAndGlyphs">06.04.2011</text><text class="e" x="378" y="918" textLength="14" lengthAdjust="spacingAndGlyphs">25</text><text class="e" x="560" y="918" textLength="35" lengthAdjust="spacingAndGlyphs">50000</text>
</g>
<!-- totals -->
<rect x="26" y="921.500" width="537" height="1.800" fill="#953735"/>
<text class="b" x="28" y="938" textLength="76" lengthAdjust="spacingAndGlyphs">Общий итог</text>
<text class="b e" x="378" y="938" textLength="28" lengthAdjust="spacingAndGlyphs">1090</text>
<text class="b e" x="560" y="938" textLength="50" lengthAdjust="spacingAndGlyphs">2180000</text>
<!-- selection -->
<rect x="381" y="243" width="181" height="19" fill="none" stroke="#20202e" stroke-width="2"/>
<rect x="560" y="260" width="5" height="5" fill="#20202e" stroke="#fff"/>
<!-- options tag -->
<rect x="566.500" y="905.500" width="17" height="16" fill="#fdf8e2" stroke="#f0e2a6"/><rect x="569.500" y="908.500" width="11" height="10" fill="#d8e2f4" stroke="#43659c"/><path d="M574.500 910v6M577.500 914v3M572 916.500h6" stroke="#2e5a92"/>

<!-- V scroll -->
<rect x="975" y="163" width="17" height="793" fill="#e6eaee"/>
<rect x="977.500" y="183.500" width="13" height="754" fill="#e2e6ea" stroke="#b8bec4"/>
<path d="M980 570.500h8M980 572.500h8M980 574.500h8M980 576.500h8" stroke="#8f959b"/>
<path d="M979 177l4.500-5 4.500 5z" fill="#5a626a"/><path d="M979 945l4.500 5 4.500-5z" fill="#5a626a"/>
<rect x="975" y="163" width="17" height="2" fill="#f4f6f8"/>
<rect x="991.500" y="163" width="1" height="793" fill="#a8aeb4"/>

<!-- sheet tabs -->
<rect y="956" width="992" height="16" fill="#e8ecf0"/><rect y="955.500" width="992" height="1" fill="#a8aeb4"/>
<g fill="#5a6068"><path d="M9 960v8h-1v-8zM15 960v8l-5-4zM24 960v8l-5-4zM34 960l5 4-5 4zM48 960l5 4-5 4zM54 960h1v8h-1z"/></g>
<path d="M62 956v15.500h50l8-15.500" fill="#fff" stroke="#b6bcc2"/>
<text x="71" y="968" font-size="13" font-weight="bold" fill="#2a3138" textLength="38" lengthAdjust="spacingAndGlyphs">Лист6</text>
<path d="M116 971l9-15M170 956l-9 15M224 956l-9 15M278 956l-9 15M312 956l-9 15M116 971.500h45M170 971.500h45M224 971.500h45M278 971.500h25" stroke="#b6bcc2" fill="none"/>
<text x="127" y="968" font-size="13" fill="#4a5560" textLength="32" lengthAdjust="spacingAndGlyphs">Лист1</text>
<text x="179" y="968" font-size="13" fill="#4a5560" textLength="34" lengthAdjust="spacingAndGlyphs">Лист2</text>
<text x="232" y="968" font-size="13" fill="#4a5560" textLength="33" lengthAdjust="spacingAndGlyphs">Лист3</text>
<rect x="289" y="962" width="10" height="8" fill="#dbe7f5" stroke="#5e82b0"/><circle cx="289" cy="961" r="3" fill="#e9b84a"/>
<rect x="589" y="958" width="5" height="12" fill="#f3f5f7" stroke="#8f959b"/>
<path d="M605 960v8l-5-4z" fill="#45494e"/>
<rect x="611.500" y="957.500" width="301" height="14" rx="1" fill="url(#hs)" stroke="#a8aeb4"/>
<path d="M758.500 961v6M760.500 961v6M762.500 961v6M764.500 961v6" stroke="#8f959b"/>
<path d="M957 960v8l5-4z" fill="#45494e"/>
<rect x="969" y="958" width="5" height="12" fill="#f3f5f7" stroke="#8f959b"/>

<!-- panel -->
<rect x="992" y="163" width="288" height="809" fill="#e9edf2"/>
<rect x="993.500" y="163" width="1" height="809" fill="#b4bac0"/>
<rect x="995" y="163" width="285" height="20" fill="url(#pn)"/>
<text x="997" y="179" font-size="13" fill="#414a54" textLength="178" lengthAdjust="spacingAndGlyphs">Список полей сводной таблицы</text>
<path d="M1247 172h8l-4 5z" fill="#3d4650"/><path d="M1264.500 170.500l7 7M1271.500 170.500l-7 7" stroke="#4b545e" stroke-width="2"/>
<rect x="1229.500" y="192.500" width="40" height="22" rx="3" fill="#eceff3" stroke="#aeb4ba"/>
<rect x="1234" y="198" width="9" height="11" fill="#cfddf0" stroke="#56779f"/><rect x="1239" y="195" width="9" height="13" fill="#f7f8fa" stroke="#6f7c88"/><path d="M1256 202h8l-4 5z" fill="#222"/>
<text x="1001" y="214" font-size="12" fill="#2d343b" textLength="210" lengthAdjust="spacingAndGlyphs">Выберите поля для добавления в отчет:</text>
<rect x="1001.500" y="223.500" width="270" height="360" fill="#fff" stroke="#a9afb6"/>
<use href="#cb" x="1004" y="226"/><use href="#cb" x="1004" y="244"/><use href="#cb" x="1004" y="262"/><use href="#cb" x="1004" y="280"/>
<g font-size="12" font-weight="bold" fill="#1e2328">
<text x="1019" y="236" textLength="75" lengthAdjust="spacingAndGlyphs">Менеджеры</text>
<text x="1019" y="254" textLength="31" lengthAdjust="spacingAndGlyphs">Дата</text>
<text x="1019" y="272" textLength="111" lengthAdjust="spacingAndGlyphs">Объем продаж, шт</text>
<text x="1019" y="290" textLength="65" lengthAdjust="spacingAndGlyphs">Выручка, р</text>
</g>
<rect x="995" y="591" width="285" height="1.500" fill="#f5f7f9"/>
<g font-size="12" fill="#2d343b">
<text x="1001" y="613" textLength="220" lengthAdjust="spacingAndGlyphs">Перетащите поля между указанными ниже</text>
<text x="1001" y="626" textLength="58" lengthAdjust="spacingAndGlyphs">областями:</text>
<text x="1026" y="643" textLength="77" lengthAdjust="spacingAndGlyphs">Фильтр отчета</text>
<text x="1166" y="643" textLength="98" lengthAdjust="spacingAndGlyphs">Названия столбцов</text>
<text x="1026" y="797" textLength="81" lengthAdjust="spacingAndGlyphs">Названия строк</text>
<text x="1166" y="797" textLength="48" lengthAdjust="spacingAndGlyphs">Значения</text>
</g>
<path d="M1003 634h13l-5 6v5l-3 2v-7z" fill="#888f97" stroke="#555c64"/>
<rect x="1141.500" y="632.500" width="15" height="12" fill="#d7dff0" stroke="#7c8a9c"/><path d="M1145.500 633v11M1149.500 633v11M1153.500 633v11M1142 636.500h14M1142 640.500h14" stroke="#8a98ac"/>
<rect x="1002.500" y="786.500" width="15" height="12" fill="#dfe5f0" stroke="#7c8a9c"/><rect x="1002.500" y="786.500" width="5" height="12" fill="#f4d48a" stroke="#a8925a"/><path d="M1007.500 787v11M1012.500 787v11M1003 790.500h14M1003 794.500h14" stroke="#8a98ac"/>
<text x="1143" y="798" font-family="Liberation Serif" font-size="14" font-weight="bold" fill="#111">Σ</text>
<rect x="1001.500" y="650.500" width="130" height="131" fill="#fff" stroke="#a9afb6"/>
<rect x="1141.500" y="650.500" width="130" height="131" fill="#fff" stroke="#a9afb6"/>
<rect x="1001.500" y="804.500" width="130" height="130" fill="#fff" stroke="#a9afb6"/>
<rect x="1141.500" y="804.500" width="130" height="130" fill="#fff" stroke="#a9afb6"/>
<g fill="url(#it)" stroke="#e6d9a2"><rect x="1143.500" y="652.500" width="126" height="18" rx="2"/><rect x="1003.500" y="806.500" width="126" height="17" rx="2"/><rect x="1003.500" y="825.500" width="126" height="17" rx="2"/><rect x="1143.500" y="806.500" width="126" height="17" rx="2"/><rect x="1143.500" y="825.500" width="126" height="17" rx="2"/></g>
<text x="1151" y="666" font-family="Liberation Serif" font-size="13" font-weight="bold" fill="#111">Σ</text>
<g font-size="12" fill="#4f5860">
<text x="1167" y="665" textLength="49" lengthAdjust="spacingAndGlyphs">Значения</text>
<text x="1009" y="819" textLength="62" lengthAdjust="spacingAndGlyphs">Менеджеры</text>
<text x="1009" y="837" textLength="27" lengthAdjust="spacingAndGlyphs">Дата</text>
<text x="1149" y="819" textLength="99" lengthAdjust="spacingAndGlyphs">Сумма по полю О...</text>
<text x="1149" y="837" textLength="98" lengthAdjust="spacingAndGlyphs">Сумма по полю В...</text>
</g>
<g style="fill:#333"><use href="#ar" x="1256" y="660"/><use href="#ar" x="1116" y="814"/><use href="#ar" x="1116" y="832"/><use href="#ar" x="1256" y="814"/><use href="#ar" x="1256" y="832"/></g>
<rect x="1001.500" y="945.500" width="12" height="12" fill="#e6e9ed" stroke="#9aa0a7"/>
<text x="1020" y="955" font-size="12" fill="#2d343b" textLength="154" lengthAdjust="spacingAndGlyphs">Отложить обновление макета</text>
<rect x="1198.500" y="941.500" width="73" height="19" rx="2" fill="#ebeef2" stroke="#c8cdd2"/>
<text x="1208" y="955" font-size="12" fill="#9aa0a7" textLength="50" lengthAdjust="spacingAndGlyphs">Обновить</text>

<!-- status bar -->
<rect y="972" width="1280" height="22" fill="url(#st)"/><rect y="972" width="1280" height="1" fill="#a8aeb4"/>
<text x="8" y="987" font-size="12" fill="#3d4650" textLength="37" lengthAdjust="spacingAndGlyphs">Готово</text>
<rect x="54" y="973" width="1" height="21" fill="#aeb3b8"/><rect x="1038" y="973" width="1" height="21" fill="#aeb3b8"/>
<rect x="1043.500" y="975.500" width="18" height="17" rx="2" fill="#fbd27a" stroke="#d9ab4f"/>
<rect x="1047.500" y="979.500" width="11" height="10" fill="#fff" stroke="#555"/><path d="M1051.500 980v9M1055.500 980v9M1048 983.500h10M1048 986.500h10" stroke="#555"/>
<rect x="1064.500" y="978.500" width="12" height="12" fill="#e8ebee" stroke="#777e85"/><rect x="1067.500" y="981.500" width="6" height="6" fill="#fff" stroke="#777e85"/>
<rect x="1083.500" y="978.500" width="13" height="11" fill="#e8ebee" stroke="#777e85"/><path d="M1090.500 979v8M1084 987.500h12" stroke="#777e85"/>
<text x="1108" y="987" font-size="12" fill="#4a5560" textLength="28" lengthAdjust="spacingAndGlyphs">100%</text>
<path d="M1152 983.500h116" stroke="#8d939a"/>
<circle cx="1152" cy="983" r="7" fill="#e8ebee" stroke="#8d939a"/><path d="M1148 983h8" stroke="#333" stroke-width="1.800"/>
<circle cx="1268" cy="983" r="7" fill="#e8ebee" stroke="#8d939a"/><path d="M1264 983h8M1268 979v8" stroke="#333" stroke-width="1.800"/>
<path d="M1206.500 977.500h8v8l-4 4-4-4z" fill="#eef1f4" stroke="#777e85"/>
</svg>
</body></html>
